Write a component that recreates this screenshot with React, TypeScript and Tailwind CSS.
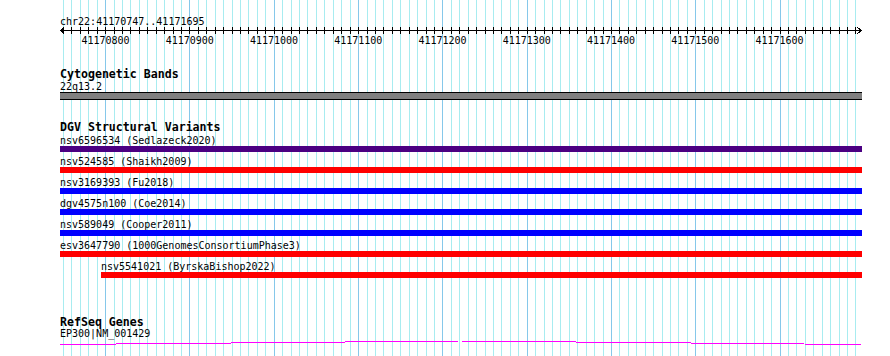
import React from "react";

const START = 41170747;
const END = 41171695;
const px = (bp: number) => 61 + ((bp - START) * 800) / 949;

const gridLines: { x: number; major: boolean }[] = [];
for (let bp = 41170750; bp <= 41171690; bp += 10) {
  gridLines.push({ x: Math.floor(px(bp)) + 0.5, major: bp % 100 === 0 });
}
const tickLabels = [41170800, 41170900, 41171000, 41171100, 41171200, 41171300, 41171400, 41171500, 41171600];

const variants = [
  { label: "nsv6596534 (Sedlazeck2020)", bar: "bg-[#4b0082]", indent: "" },
  { label: "nsv524585 (Shaikh2009)", bar: "bg-[#ff0000]", indent: "" },
  { label: "nsv3169393 (Fu2018)", bar: "bg-[#0000ff]", indent: "" },
  { label: "dgv4575n100 (Coe2014)", bar: "bg-[#0000ff]", indent: "" },
  { label: "nsv589049 (Cooper2011)", bar: "bg-[#0000ff]", indent: "" },
  { label: "esv3647790 (1000GenomesConsortiumPhase3)", bar: "bg-[#ff0000]", indent: "" },
  { label: "nsv5541021 (ByrskaBishop2022)", bar: "bg-[#ff0000]", indent: "ml-[41px]" },
];

// background grid, one line per 10 bp
function Grid() {
  return (
    <svg className="absolute inset-0" width={890} height={356} shapeRendering="crispEdges">
      {gridLines.map((g, i) => (
        <line
          key={i}
          x1={g.x}
          x2={g.x}
          y1={0}
          y2={356}
          stroke={g.major ? "#86c8ea" : "#a8ecf0"}
          strokeWidth={1}
        />
      ))}
    </svg>
  );
}

function Ruler() {
  return (
    <div className="flex flex-col">
      <svg className="block ml-[-60px]" width={862} height={7} shapeRendering="crispEdges">
        <line x1={60} x2={862} y1={3.5} y2={3.5} stroke="#000" />
        <polyline points="64.5,0.5 60.5,3.5 64.5,6.5" fill="none" stroke="#000" />
        <polyline points="857.5,0.5 861.5,3.5 857.5,6.5" fill="none" stroke="#000" />
        {gridLines.map((g, i) => (
          <line key={i} x1={g.x} x2={g.x} y1={0} y2={7} stroke="#000" />
        ))}
      </svg>
      <div className="flex h-[13px] pt-[1px] pl-[3.4px] text-[10px] leading-[12px]">
        {tickLabels.map((n) => (
          <span key={n} className="w-[84.25px] shrink-0 text-center">
            {n}
          </span>
        ))}
      </div>
    </div>
  );
}

function TrackTitle({ children, className = "leading-[11px]" }: { children: React.ReactNode; className?: string }) {
  return <div className={`pt-[1px] text-[11.6px] font-bold ${className}`}>{children}</div>;
}

function Label({ children }: { children: React.ReactNode }) {
  return <div className="pt-[1px] text-[10px] leading-[11px] whitespace-nowrap">{children}</div>;
}

export default function App() {
  return (
    <div className="relative w-[890px] h-[356px] bg-white overflow-hidden text-black font-['DejaVu_Sans_Mono',monospace]">
      <Grid />
      <div className="relative w-[862px] pl-[60px] pt-[15px] flex flex-col">
        <Label>
          chr22:{START}..{END}
        </Label>
        <Ruler />

        <div className="mt-[21px] flex flex-col">
          <TrackTitle>Cytogenetic Bands</TrackTitle>
          <Label>22q13.2</Label>
          <div className="h-[8px] bg-[#808080] border-y border-black" />
        </div>

        <div className="mt-[21px] flex flex-col">
          <TrackTitle>DGV Structural Variants</TrackTitle>
          <div className="mt-[1px] flex flex-col gap-[3px]">
            {variants.map((v) => (
              <div key={v.label} className={v.indent}>
                <Label>{v.label}</Label>
                <div className={`h-[6px] ${v.bar}`} />
              </div>
            ))}
          </div>
        </div>

        <div className="mt-[38px] flex flex-col">
          <TrackTitle className="leading-[10px]">RefSeq Genes</TrackTitle>
          <Label>EP300|NM_001429</Label>
          <svg width={802} height={8} className="block" shapeRendering="crispEdges">
            <polyline points="0,5.5 400,2 801,5.5" fill="none" stroke="#ff00ff" strokeWidth={1} />
          </svg>
        </div>
      </div>
    </div>
  );
}
